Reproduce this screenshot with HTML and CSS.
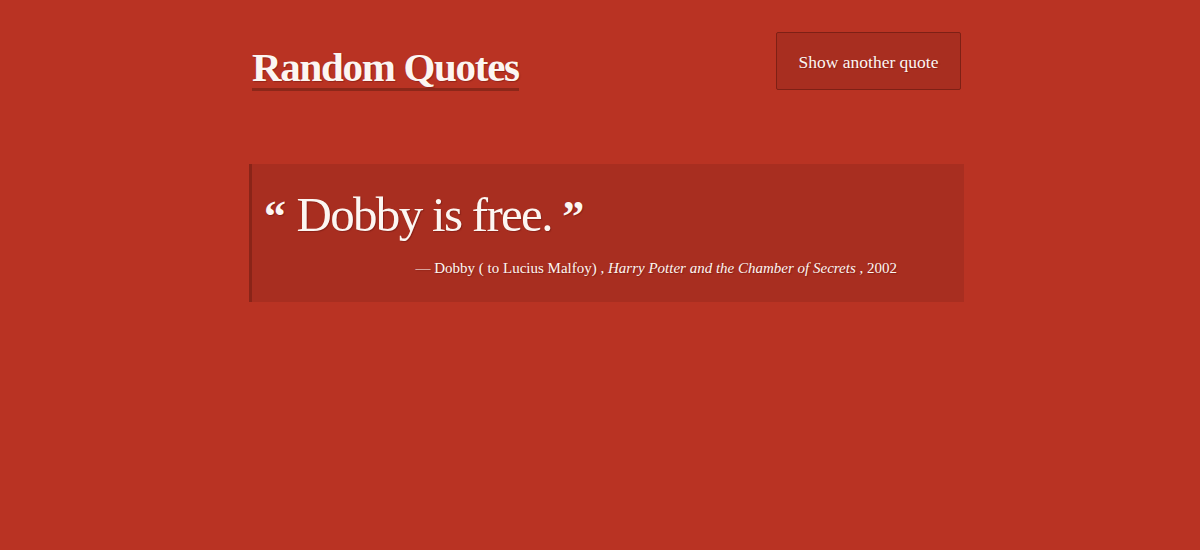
FILE: index.html
```html
<!DOCTYPE html>
<html lang="en">
<head>
<meta charset="utf-8">
<title>Random Quotes</title>
<link rel="stylesheet" href="styles.css">
</head>
<body>
<div class="container">
  <header class="header">
    <h1 class="title">Random Quotes</h1>
    <button class="btn">Show another quote</button>
  </header>
  <blockquote class="quote">
    <p class="quote-text"><span class="mark">“</span> Dobby is free. <span class="mark">”</span></p>
    <footer class="cite">— Dobby ( to Lucius Malfoy) , <em>Harry Potter and the Chamber of Secrets</em> , 2002</footer>
  </blockquote>
</div>
</body>
</html>
```
FILE: styles.css
```css
html, body {
  margin: 0;
  padding: 0;
  background: #b93323;
  height: 100%;
}
body {
  font-family: "Liberation Serif", "Times New Roman", serif;
  color: #fcf6f2;
}
.container {
  width: 715px;
  margin-left: calc(50% - 351px);
  padding-top: 32px;
}
.header {
  display: flex;
  justify-content: space-between;
  align-items: flex-start;
  padding: 0 3px;
}
.title {
  margin: 0;
  font-size: 41px;
  font-weight: bold;
  line-height: 42px;
  padding-top: 14px;
  border-bottom: 3px solid #8c2719;
  text-shadow: 1px 1px 1px rgba(80, 10, 5, 0.35);
  letter-spacing: -1.3px;
}
.btn {
  width: 185px;
  height: 58px;
  background: #a82e20;
  border: 1px solid #7e2015;
  border-radius: 2px;
  color: #fcf6f2;
  font-family: inherit;
  font-size: 17.5px;
  text-shadow: 1px 1px 1px rgba(80, 10, 5, 0.35);
  padding: 3px 0 0;
}
.quote {
  margin: 73px 0 0 0;
  background: #a82e20;
  border-left: 3px solid #8a2418;
  padding: 21px 67px 25px 12px;
}
.quote-text {
  margin: 0;
  font-size: 49px;
  line-height: 60px;
  text-shadow: 1px 1px 1px rgba(80, 10, 5, 0.35);
  letter-spacing: -1.7px;
}
.mark {
  font-weight: bold;
  font-size: 44px;
  letter-spacing: 0;
}
.cite {
  margin-top: 13px;
  text-align: right;
  font-size: 15px;
  line-height: 17px;
  text-shadow: 1px 1px 1px rgba(80, 10, 5, 0.35);
}
```
